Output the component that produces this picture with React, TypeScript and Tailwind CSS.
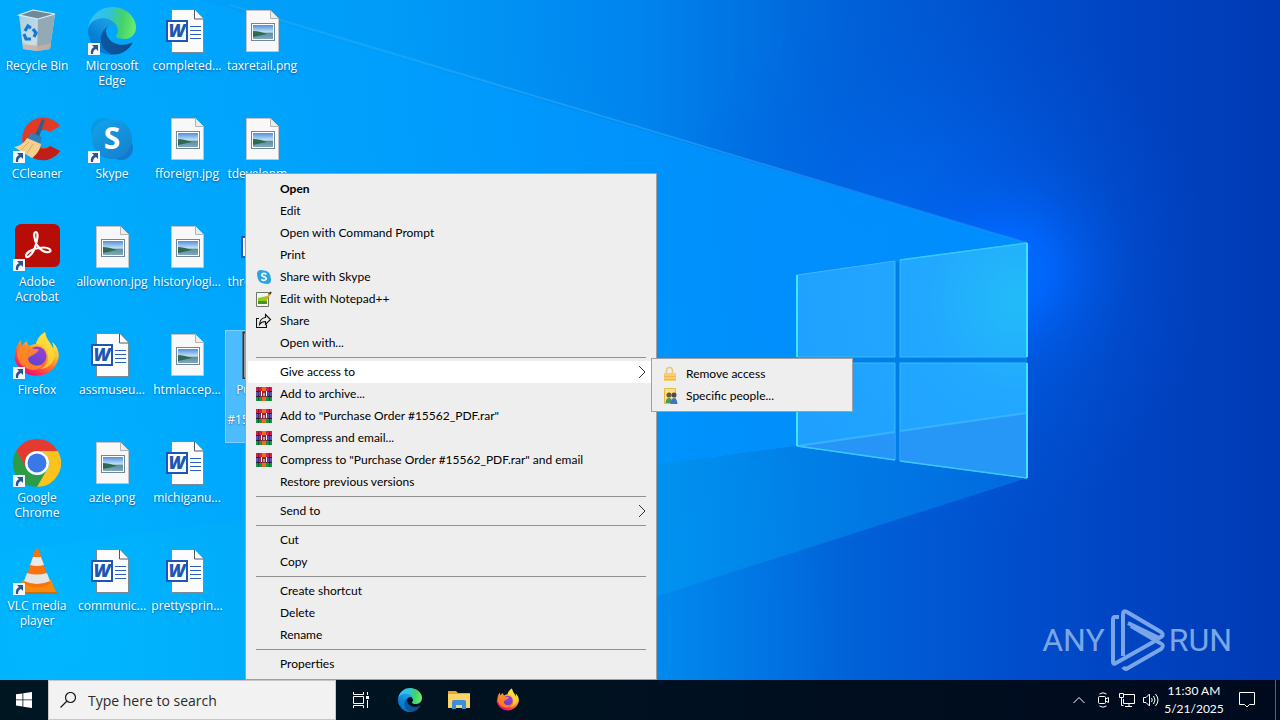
import React from 'react';

/* ---------- wallpaper ---------- */

const Wallpaper = () => (
  <svg
    className="absolute inset-0 h-full w-full"
    viewBox="0 0 1280 680"
    preserveAspectRatio="xMidYMid slice"
    aria-hidden="true"
  >
    <defs>
      <linearGradient id="wp-base" x1="0" y1="0" x2="1" y2="0">
        <stop offset="0" stopColor="#00a9ff" />
        <stop offset="0.3" stopColor="#009dfa" />
        <stop offset="0.5" stopColor="#0084ee" />
        <stop offset="0.66" stopColor="#0062d8" />
        <stop offset="0.8" stopColor="#004dcb" />
        <stop offset="0.9" stopColor="#0042c0" />
        <stop offset="1" stopColor="#003ab4" />
      </linearGradient>
      <radialGradient id="wp-glow" gradientUnits="userSpaceOnUse" cx="1010" cy="270" r="130">
        <stop offset="0" stopColor="#006eff" />
        <stop offset="0.3" stopColor="#0068ff" stopOpacity="0.85" />
        <stop offset="0.65" stopColor="#005cee" stopOpacity="0.35" />
        <stop offset="1" stopColor="#0050dc" stopOpacity="0" />
      </radialGradient>
      <radialGradient id="wp-halo" gradientUnits="userSpaceOnUse" cx="930" cy="270" r="280">
        <stop offset="0" stopColor="#0074ff" stopOpacity="0.8" />
        <stop offset="0.5" stopColor="#0068f4" stopOpacity="0.35" />
        <stop offset="1" stopColor="#0058e0" stopOpacity="0" />
      </radialGradient>
      <radialGradient id="wp-corner" gradientUnits="userSpaceOnUse" cx="60" cy="640" r="800">
        <stop offset="0" stopColor="#00b8ff" />
        <stop offset="0.5" stopColor="#00aaf8" stopOpacity="0.6" />
        <stop offset="1" stopColor="#0090ec" stopOpacity="0" />
      </radialGradient>
      <linearGradient id="wp-beam" x1="0" y1="0" x2="1" y2="0">
        <stop offset="0" stopColor="#00b0ff" stopOpacity="0.5" />
        <stop offset="0.6" stopColor="#0096ff" stopOpacity="0.85" />
        <stop offset="1" stopColor="#0090ff" stopOpacity="0.95" />
      </linearGradient>
      <linearGradient id="wp-low" x1="0" y1="0" x2="1" y2="0">
        <stop offset="0" stopColor="#00b0ff" stopOpacity="0" />
        <stop offset="0.65" stopColor="#0096f0" stopOpacity="0.7" />
        <stop offset="1" stopColor="#0074e4" stopOpacity="0.7" />
      </linearGradient>
      <linearGradient id="wp-ray" gradientUnits="userSpaceOnUse" x1="230" y1="0" x2="1027" y2="0">
        <stop offset="0" stopColor="#5cc8ff" stopOpacity="0.15" />
        <stop offset="0.6" stopColor="#30b0ff" stopOpacity="0.5" />
        <stop offset="1" stopColor="#20a0ff" stopOpacity="0.4" />
      </linearGradient>
      <radialGradient id="wp-pane" gradientUnits="userSpaceOnUse" cx="1020" cy="300" r="240">
        <stop offset="0" stopColor="#22bcf8" />
        <stop offset="0.4" stopColor="#22a8ff" />
        <stop offset="1" stopColor="#1fa0ff" />
      </radialGradient>
    </defs>
    <rect width="1280" height="680" fill="url(#wp-base)" />
    <rect width="1280" height="680" fill="url(#wp-corner)" />
    <rect width="1280" height="680" fill="url(#wp-halo)" />
    <rect width="1280" height="680" fill="url(#wp-glow)" />
    <path d="M0 0H200L1027 243V478L797 446L0 552z" fill="url(#wp-beam)" />
    <path d="M797 446L0 552V680H395L1027 478z" fill="url(#wp-low)" />
    <path d="M230 5L1027 243" stroke="url(#wp-ray)" strokeWidth="2" />
    <path d="M797 276L1027 243V478L797 446z" fill="#007fe8" />
    <g fill="url(#wp-pane)" stroke="#3cb8ff" strokeWidth="1">
      <path d="M797 275L895 261V357H797z" />
      <path d="M900 260L1027 243V357H900z" />
      <path d="M797 363H895V460L797 446z" />
      <path d="M900 363H1027V478L900 461z" />
    </g>
    <path d="M797 446L895 432V460zM900 431L1027 413V478L900 461z" fill="#2a90f4" opacity="0.7" />
    <path d="M797 446L895 432M900 431L1027 413" stroke="#38b2ff" strokeWidth="2" />
    <path d="M900 260L1027 243M797 446L895 460M900 461L1027 478" stroke="#38c8ff" strokeWidth="1.500" />
    <path d="M797 357V275M797 363V446M1027 357V243M1027 363V478" fill="none" stroke="#3ce6ff" strokeWidth="2" />
  </svg>
);

const Watermark = () => (
  <div
    className="absolute right-12 bottom-2 flex h-16 items-center font-['Roboto',sans-serif] text-[32px] leading-none text-[#7ba6e6]"
  >
    <span>ANY</span>
    <svg className="mx-1 h-16 w-14" viewBox="0 0 56 64" fill="none" stroke="#78a6e8" strokeWidth="4" strokeLinejoin="round" aria-hidden="true">
      <path d="M10 9H6Q4 9 4 12V54Q4 57 7 55L46 33" />
      <path d="M14 48V6Q14 2 18 4L52 24Q56 28 50 30L19 15" />
      <path d="M14 59Q16 62 19 60L52 41Q56 37 51 35L22 18" />
    </svg>
    <span>RUN</span>
  </div>
);

/* ---------- app and file icons ---------- */

const EdgeIcon = ({ className = 'h-12 w-12' }: { className?: string }) => (
  <svg className={className} viewBox="0 0 256 256" aria-hidden="true">
    <defs>
      <linearGradient id="edge-a" x1="60" y1="178" x2="241" y2="178" gradientUnits="userSpaceOnUse">
        <stop offset="0" stopColor="#0c59a4" />
        <stop offset="1" stopColor="#114a8b" />
      </linearGradient>
      <linearGradient id="edge-b" x1="150" y1="100" x2="40" y2="222" gradientUnits="userSpaceOnUse">
        <stop offset="0" stopColor="#1b9de2" />
        <stop offset="0.3" stopColor="#1595df" />
        <stop offset="0.7" stopColor="#0680d7" />
        <stop offset="1" stopColor="#0078d4" />
      </linearGradient>
      <linearGradient id="edge-c" x1="20" y1="60" x2="250" y2="100" gradientUnits="userSpaceOnUse">
        <stop offset="0" stopColor="#35c1f1" />
        <stop offset="0.35" stopColor="#2fc2df" />
        <stop offset="0.7" stopColor="#43d26b" />
        <stop offset="1" stopColor="#66eb6e" />
      </linearGradient>
    </defs>
    <path fill="url(#edge-a)" d="M231.07 190.54c-3.43 1.8-6.96 3.37-10.57 4.71a101.96 101.96 0 0 1-35.9 6.46c-47.31 0-88.52-32.54-88.52-74.31a31.46 31.46 0 0 1 16.43-27.31c-42.8 1.8-53.8 46.4-53.8 72.53 0 73.88 68.09 81.37 82.76 81.37 7.91 0 19.84-2.3 27-4.56l1.31-.44a128.34 128.34 0 0 0 66.6-52.8 4 4 0 0 0-5.31-5.65z" />
    <path fill="url(#edge-b)" d="M105.73 241.42a79.2 79.2 0 0 1-22.74-21.34 80.72 80.72 0 0 1 29.53-120c3.12-1.47 8.45-4.13 15.54-4a32.35 32.35 0 0 1 25.69 13 31.88 31.88 0 0 1 6.36 18.66c0-.21 24.46-79.6-80-79.6-43.9 0-80 41.66-80 78.21a130.15 130.15 0 0 0 12.11 56 128 128 0 0 0 156.38 67.11 75.55 75.55 0 0 1-62.78-8z" />
    <path fill="url(#edge-c)" d="M152.33 148.86c-.81 1.05-3.3 2.5-3.3 5.66 0 2.61 1.7 5.12 4.72 7.23 14.38 10 41.49 8.68 41.56 8.68a59.56 59.56 0 0 0 30.27-8.35A61.38 61.38 0 0 0 256 109.11c.26-22.41-8-37.31-11.34-43.91C223.46 23.86 177.72 0 128 0A128 128 0 0 0 0 126.2c.48-36.54 36.8-66.05 80-66.05 3.5 0 23.46.34 42 10.07 16.34 8.58 24.9 18.94 30.85 29.21 6.18 10.67 7.28 24.15 7.28 29.52s-2.74 13.33-7.8 19.91z" />
  </svg>
);

const FirefoxIcon = ({ className = 'h-12 w-12' }: { className?: string }) => (
  <svg className={className} viewBox="0 0 48 48" aria-hidden="true">
    <defs>
      <linearGradient id="ff-body" x1="0.8" y1="0.1" x2="0.25" y2="0.95">
        <stop offset="0" stopColor="#fff44f" />
        <stop offset="0.3" stopColor="#ffc22e" />
        <stop offset="0.55" stopColor="#ff7a2a" />
        <stop offset="0.8" stopColor="#ff3750" />
        <stop offset="1" stopColor="#eb0878" />
      </linearGradient>
      <linearGradient id="ff-core" x1="0.7" y1="0" x2="0.3" y2="1">
        <stop offset="0" stopColor="#a03be0" />
        <stop offset="1" stopColor="#5b46c8" />
      </linearGradient>
    </defs>
    <path fill="url(#ff-body)" d="M45 20c-1-4-3-7-6-9 1 3 2 5 1 7C38 12 33 9 32 1c-6 4-8 8-9 12-3 0-5 1-7 2-1-1-2-3-2-5-2 1-4 3-5 5-1-2-1-4-1-6-4 4-5 8-5 11-1 3-2 6-1 9a22.500 22.500 0 0 0 43 0c1-3 1-6 0-9z" />
    <path fill="#ffdb3c" d="M32 1c-6 4-8 8-9 12 6 0 11 5 12 11 1 7-3 12-8 14 10 0 16-9 14-18C39 12 33 9 32 1z" opacity="0.75" />
    <circle cx="24" cy="25" r="9.500" fill="url(#ff-core)" />
    <path fill="#ff8a26" d="M4 20c2-5 7-7 12-5 2 2 4 3 8 3 2 0 2 1 1 2-1 2-4 3-5 4-2 1-5 2-5 5 2 5 8 7 14 5 0 2-4 5-9 5C10 38 3 30 4 20z" opacity="0.9" />
  </svg>
);

const ChromeIcon = () => (
  <svg className="h-12 w-12" viewBox="0 0 48 48" aria-hidden="true">
    <path fill="#e53a2e" d="M24 12H44.800A24 24 0 0 0 3.200 12L13.600 30A12 12 0 0 1 24 12z" />
    <path fill="#2c9c46" d="M13.600 30L3.200 12A24 24 0 0 0 24 48L34.400 30A12 12 0 0 1 13.600 30z" />
    <path fill="#fcc31e" d="M34.400 30L24 48A24 24 0 0 0 44.800 12H24A12 12 0 0 1 34.400 30z" />
    <circle cx="24" cy="24" r="12" fill="#fff" />
    <circle cx="24" cy="24" r="9.500" fill="#3b78e7" />
  </svg>
);

const RecycleIcon = () => (
  <svg className="h-12 w-12" viewBox="0 0 48 48" aria-hidden="true">
    <defs>
      <linearGradient id="bin" x1="0" y1="0" x2="1" y2="1">
        <stop offset="0" stopColor="#a4cfe6" />
        <stop offset="0.6" stopColor="#cfdde4" />
        <stop offset="1" stopColor="#98a8b2" />
      </linearGradient>
    </defs>
    <path d="M6 8L25 12 42 7 37 42 24 44 10 42z" fill="url(#bin)" />
    <path d="M25 12L42 7 37 42 24 44z" fill="#93a9b6" />
    <path d="M10 37L25 39 38 36 37 42 24 44 10 42z" fill="#c8b0a0" opacity="0.8" />
    <path d="M6 8L20 3 42 7 25 12z" fill="#6f8998" stroke="#e0f0f8" strokeWidth="1.200" />
    <path d="M12 24L15 19 18 21M20 22L23 26 21 30M18 32H13L11 27" fill="none" stroke="#1478d4" strokeWidth="3.200" />
  </svg>
);

const CCleanerIcon = () => (
  <svg className="h-12 w-12" viewBox="0 0 48 48" aria-hidden="true">
    <path d="M47 11A21 21 0 1 0 47 36L37 31A9 9 0 1 1 37 17z" fill="#e23a26" />
    <path d="M47 36A21 21 0 0 1 20 43L26 33A9 9 0 0 0 37 31z" fill="#c01f18" />
    <path d="M29 4l3 1-6 17-4-2z" fill="#2c5f90" />
    <path d="M18 18l11 4-2 7-13-5z" fill="#2f80b8" />
    <path d="M14 23l14 6c-1 6-4 10-9 14L1 32c6-1 10-4 13-9z" fill="#f6cf8d" />
    <path d="M16 27l-8 8M20 29l-6 9" stroke="#dca95a" strokeWidth="1" />
  </svg>
);

const SkypeIcon = () => (
  <svg className="h-12 w-12" viewBox="0 0 48 48" aria-hidden="true">
    <defs>
      <linearGradient id="skype" x1="0" y1="0" x2="0.6" y2="1">
        <stop offset="0" stopColor="#12a4ea" />
        <stop offset="1" stopColor="#1484d0" />
      </linearGradient>
    </defs>
    <circle cx="15" cy="15" r="12" fill="#0899e6" />
    <circle cx="33" cy="33" r="12" fill="#1478cc" />
    <circle cx="24" cy="24" r="20" fill="url(#skype)" />
    <text x="24" y="34" textAnchor="middle" fill="#fff" className="font-['Open_Sans',sans-serif] text-[30px] font-bold">S</text>
  </svg>
);

const AcrobatIcon = () => (
  <svg className="h-12 w-12" viewBox="0 0 48 48" aria-hidden="true">
    <rect x="2" y="1" width="45" height="43" rx="6" fill="#b80c06" />
    <path d="M23 9c-3 0-2 7 1 13 3 5 8 8 12 7s0-6-10-4c-8 1-13 5-13 8 0 3 5 0 8-6 3-7 5-18 2-18z" fill="none" stroke="#fff" strokeWidth="2.200" />
  </svg>
);

const VlcIcon = () => (
  <svg className="h-12 w-12" viewBox="0 0 48 48" aria-hidden="true">
    <path d="M10 33H38L44 47H4z" fill="#f58a0e" />
    <path d="M4 45H44V47H4z" fill="#cf6a05" />
    <path d="M22 3Q24 0 26 3L37 37Q24 44 11 37z" fill="#f8730d" />
    <path d="M20 10H28L31 18Q24 20 17 18z" fill="#e9e9e9" />
    <path d="M14 26Q24 29 34 26L37 34Q24 40 11 34z" fill="#e4e4e4" />
  </svg>
);

const WordIcon = () => (
  <svg className="h-12 w-12" viewBox="0 0 48 48" aria-hidden="true">
    <path d="M8.500 2.500H31.500L40.500 12V45.500H8.500z" fill="#fcfcfc" stroke="#7c8a96" />
    <path d="M31.500 2.500V12H40.500" fill="#fff" stroke="#4c5a66" />
    <path d="M27 19.500H38M27 23.500H38M27 27.500H38M27 31.500H38" stroke="#2b62b4" />
    <rect x="4" y="14" width="20" height="20" fill="#fff" stroke="#1d57b3" strokeWidth="2" />
    <text x="14" y="30" textAnchor="middle" fill="#1d57b3" className="font-['Open_Sans',sans-serif] text-[18px] font-extrabold italic">W</text>
  </svg>
);

const ImageIcon = () => (
  <svg className="h-12 w-12" viewBox="0 0 48 48" aria-hidden="true">
    <defs>
      <linearGradient id="pic" x1="0" y1="0" x2="0" y2="1">
        <stop offset="0" stopColor="#4f90dc" />
        <stop offset="0.5" stopColor="#c4e0f4" />
        <stop offset="0.6" stopColor="#5f8f98" />
        <stop offset="1" stopColor="#7fa8c4" />
      </linearGradient>
    </defs>
    <path d="M8.500 3.500H32.500L40.500 11.500V44.500H8.500z" fill="#f8f8f8" stroke="#c4c4c4" />
    <path d="M32.500 3.500V11.500H40.500" fill="#e8eef2" stroke="#b4b4b4" />
    <rect x="13.500" y="16.500" width="23" height="17" fill="#fff" stroke="#6f8798" />
    <rect x="15" y="18" width="20" height="14" fill="url(#pic)" />
    <path d="M15 24Q20 24 29 27L15 30z" fill="#2f6a50" />
  </svg>
);

const ProgramIcon = () => (
  <svg className="h-12 w-12" viewBox="0 0 48 48" aria-hidden="true">
    <path d="M5.500 1.500H42.500V47.500H5.500z" fill="#fff" stroke="#3a3230" strokeWidth="2" />
  </svg>
);

const ShortcutArrow = () => (
  <svg className="absolute bottom-0 left-0 h-3 w-3" viewBox="0 0 12 12" aria-hidden="true">
    <path d="M0 0H12V12H0z" fill="#f6f6f6" />
    <path d="M4 2H10V8L8 6Q5 7 5 11H3Q2 6 6 4z" fill="#2a5594" />
  </svg>
);

/* ---------- desktop ---------- */

type Shortcut = {
  label: string;
  icon: React.ReactNode;
  linked?: boolean;
  selected?: boolean;
};

// fills column by column, six to a column
const shortcuts: Shortcut[] = [
  { label: 'Recycle Bin', icon: <RecycleIcon /> },
  { label: 'CCleaner', icon: <CCleanerIcon />, linked: true },
  { label: 'Adobe\nAcrobat', icon: <AcrobatIcon />, linked: true },
  { label: 'Firefox', icon: <FirefoxIcon />, linked: true },
  { label: 'Google\nChrome', icon: <ChromeIcon />, linked: true },
  { label: 'VLC media\nplayer', icon: <VlcIcon />, linked: true },
  { label: 'Microsoft\nEdge', icon: <EdgeIcon />, linked: true },
  { label: 'Skype', icon: <SkypeIcon />, linked: true },
  { label: 'allownon.jpg', icon: <ImageIcon /> },
  { label: 'assmuseu...', icon: <WordIcon /> },
  { label: 'azie.png', icon: <ImageIcon /> },
  { label: 'communic...', icon: <WordIcon /> },
  { label: 'completed...', icon: <WordIcon /> },
  { label: 'fforeign.jpg', icon: <ImageIcon /> },
  { label: 'historylogi...', icon: <ImageIcon /> },
  { label: 'htmlaccep...', icon: <ImageIcon /> },
  { label: 'michiganu...', icon: <WordIcon /> },
  { label: 'prettysprin...', icon: <WordIcon /> },
  { label: 'taxretail.png', icon: <ImageIcon /> },
  { label: 'tdevelopm...', icon: <ImageIcon /> },
  { label: 'throughou...', icon: <WordIcon /> },
  { label: 'Purchase\nOrder\n#15562_PDF\n.exe', icon: <ProgramIcon />, selected: true },
];

const DesktopIcon = ({ label, icon, linked, selected }: Shortcut) => (
  <button
    type="button"
    className={
      'flex flex-col items-center self-start pt-px pr-px text-white ' +
      (selected ? 'bg-[#4dbcff] pb-px outline outline-1 -outline-offset-1 outline-[#7fd0ff]' : '')
    }
  >
    <span className="relative block h-12 w-12">
      {icon}
      {linked && <ShortcutArrow />}
    </span>
    <span className="mt-[3px] text-center text-[12px] leading-[15px] whitespace-pre [text-shadow:0_1px_2px_rgba(0,40,90,0.6)]">
      {label}
    </span>
  </button>
);

/* ---------- context menu ---------- */

const SkypeSmall = () => (
  <svg className="h-4 w-4" viewBox="0 0 16 16" aria-hidden="true">
    <circle cx="5" cy="5" r="4" fill="#2aa5e6" />
    <circle cx="11" cy="11" r="4" fill="#2aa5e6" />
    <circle cx="8" cy="8" r="6.500" fill="#2aa5e6" />
    <path d="M10.500 5.500Q8 3.500 6 5.200 5.200 7 8 7.800 11 8.600 10 10.500 8 12.300 5.300 10.300" fill="none" stroke="#fff" strokeWidth="1.600" />
  </svg>
);

const NotepadIcon = () => (
  <svg className="h-4 w-4" viewBox="0 0 16 16" aria-hidden="true">
    <path d="M0.500 1.500H12.500V15.500H0.500z" fill="#f4f6ee" stroke="#6f7468" />
    <path d="M2 7L11 5V13H2z" fill="#8ccc2c" />
    <path d="M2 10H11V13H2z" fill="#3d9a1c" />
    <path d="M9 10L14 3" stroke="#e8a425" strokeWidth="2" />
    <path d="M13.500 3L15 1" stroke="#333" strokeWidth="2" />
  </svg>
);

const ShareIcon = () => (
  <svg className="h-4 w-4" viewBox="0 0 16 16" fill="none" stroke="#111" strokeWidth="1.100" aria-hidden="true">
    <path d="M3 5.500H0.500V14.500H10.500V11.500" />
    <path d="M9.500 1.500L14.500 6.500 9.500 11.500V8.500Q5.500 8.500 3.500 11.500 4 5 9.500 4.500z" />
  </svg>
);

const RarIcon = () => (
  <svg className="h-4 w-4" viewBox="0 0 16 16" aria-hidden="true">
    <path d="M0 1H16V5H0z" fill="#d8204c" />
    <path d="M0 6H16V10H0z" fill="#5a50b8" />
    <path d="M0 11H16V15H0z" fill="#109a40" />
    <path d="M0 5H16V6H0zM0 10H16V11H0z" fill="#2a1a3a" />
    <path d="M2.500 1V15M13.500 1V15" stroke="#201030" strokeOpacity="0.5" />
    <path d="M6 1H10V15H6z" fill="#ee6a1c" />
    <path d="M4 5H12V11H4z" fill="#8c2b3c" />
    <path d="M5.500 5V10M8 7V10M10.500 5V10" stroke="#fff" strokeWidth="1" />
  </svg>
);

const LockIcon = () => (
  <svg className="h-4 w-4" viewBox="0 0 16 16" aria-hidden="true">
    <path d="M4.500 8V5Q4.500 1.500 7.500 1.500T10.500 5V8" fill="none" stroke="#e8c877" strokeWidth="1.600" />
    <path d="M2 7H14V15H2z" fill="#f8cf6c" />
    <path d="M2 10.500H14M2 13.500H14" stroke="#efb94e" />
  </svg>
);

const PeopleIcon = () => (
  <svg className="h-4 w-4" viewBox="0 0 16 16" aria-hidden="true">
    <path d="M2.500 0.500H13.500V15.500H2.500z" fill="#fbdf83" stroke="#e8b93e" />
    <circle cx="7" cy="7" r="2.500" fill="#6a5642" />
    <circle cx="12" cy="7" r="2.500" fill="#4c4a52" />
    <path d="M3.500 15Q4 10 7 10T10 15z" fill="#4a9a5c" />
    <path d="M8.500 16Q9 10 12 10T15.500 16z" fill="#3a76c8" />
  </svg>
);

const Arrow = () => (
  <svg className="ml-auto h-3.5 w-2" viewBox="0 0 8 14" fill="none" stroke="#333" aria-hidden="true">
    <path d="M1 1L7 7 1 13" />
  </svg>
);

type Entry = {
  label: string;
  icon?: React.ReactNode;
  bold?: boolean;
  active?: boolean;
  children?: Entry[];
  more?: boolean;
};

const menuGroups: Entry[][] = [
  [
    { label: 'Open', bold: true },
    { label: 'Edit' },
    { label: 'Open with Command Prompt' },
    { label: 'Print' },
    { label: 'Share with Skype', icon: <SkypeSmall /> },
    { label: 'Edit with Notepad++', icon: <NotepadIcon /> },
    { label: 'Share', icon: <ShareIcon /> },
    { label: 'Open with...' },
  ],
  [
    {
      label: 'Give access to',
      active: true,
      more: true,
      children: [
        { label: 'Remove access', icon: <LockIcon /> },
        { label: 'Specific people...', icon: <PeopleIcon /> },
      ],
    },
    { label: 'Add to archive...', icon: <RarIcon /> },
    { label: 'Add to "Purchase Order #15562_PDF.rar"', icon: <RarIcon /> },
    { label: 'Compress and email...', icon: <RarIcon /> },
    { label: 'Compress to "Purchase Order #15562_PDF.rar" and email', icon: <RarIcon /> },
    { label: 'Restore previous versions' },
  ],
  [{ label: 'Send to', more: true }],
  [{ label: 'Cut' }, { label: 'Copy' }],
  [{ label: 'Create shortcut' }, { label: 'Delete' }, { label: 'Rename' }],
  [{ label: 'Properties' }],
];

const menuBox = 'border border-[#a0a0a0] bg-[#eeeeee] px-0.5 py-1';

const MenuItem = ({ entry }: { entry: Entry }) => (
  <li role="none" className="relative">
    <button
      type="button"
      role="menuitem"
      className={
        'flex h-[22px] w-full items-center pr-2 pl-2 text-left whitespace-nowrap ' +
        (entry.active ? 'bg-white ' : '') +
        (entry.bold ? 'font-bold' : '')
      }
    >
      <span className="mr-2 block h-4 w-4 shrink-0">{entry.icon}</span>
      {entry.label}
      {entry.more && <Arrow />}
    </button>
    {entry.children && (
      <ul role="menu" className={'absolute -top-[3px] left-full z-10 -ml-[3px] w-[202px] ' + menuBox}>
        {entry.children.map((child) => (
          <MenuItem key={child.label} entry={child} />
        ))}
      </ul>
    )}
  </li>
);

const ContextMenu = () => (
  <div role="menu" className={"absolute top-[173px] left-[245px] w-[412px] font-['Lato','Open_Sans',sans-serif] text-[12px] text-black " + menuBox}>
    {menuGroups.map((group, index) => (
      <ul
        key={index}
        role="group"
      >
        {index > 0 && <li role="separator" className="mx-2 my-[3px] h-px bg-[#919191]" />}
        {group.map((entry) => (
          <MenuItem key={entry.label} entry={entry} />
        ))}
      </ul>
    ))}
  </div>
);

/* ---------- taskbar ---------- */

const ExplorerIcon = () => (
  <svg className="h-6 w-6" viewBox="0 0 24 24" aria-hidden="true">
    <path d="M1 3H9L11 5H23V20H1z" fill="#e8a62c" />
    <path d="M1 6H23V20H1z" fill="#fbd367" />
    <path d="M5 21V14Q5 12 7 12H17Q19 12 19 14V21H15V17H9V21H5z" fill="#3a8fd8" />
  </svg>
);

const TaskViewIcon = () => (
  <svg className="h-4 w-4" viewBox="0 0 16 16" fill="none" stroke="#fff" aria-hidden="true">
    <path d="M0.500 0V2.500H10.500V0M0.500 16V13.500H10.500V16M0.500 4.500H10.500V11.500H0.500zM14.500 0V3M14.500 8V16" />
    <path d="M13 4H16V7H13z" fill="#fff" stroke="none" />
  </svg>
);

const trayIcons = [
  {
    name: 'Show hidden icons',
    icon: <path d="M2.500 11L8 5.500 13.500 11" />,
  },
  {
    name: 'Meet Now',
    icon: <path d="M4.500 2Q8 -0.500 11.500 2M4.500 14Q8 16.500 11.500 14M4.500 4.500H9.500Q10.500 4.500 10.500 5.500V10.500Q10.500 11.500 9.500 11.500H4.500Q3.500 11.500 3.500 10.500V5.500Q3.500 4.500 4.500 4.500zM10.500 7L13.500 5.500V10.500L10.500 9" />,
  },
  {
    name: 'Network',
    icon: <path d="M5 2.500H15.500V11.500H4.500V7M10 11.500V14.500M6 14.500H13M0.500 1.500H4.500V5.500H0.500zM2.500 5.500V13.500H4.500" />,
  },
  {
    name: 'Volume',
    icon: <path d="M0.500 5.500H3L6.500 2V14L3 10.500H0.500zM8.500 6Q10 8 8.500 10M10.500 4Q13.500 8 10.500 12M12.500 2Q17.500 8 12.500 14" />,
  },
];

const Taskbar = () => (
  <footer className="flex h-10 items-stretch bg-linear-to-r from-[#001722] to-[#000a1e] text-white">
    <button type="button" aria-label="Start" className="flex w-12 items-center justify-center">
      <svg className="h-4 w-4" viewBox="0 0 16 16" fill="#fff" aria-hidden="true">
        <path d="M0 2.300L6.500 1.400V7.500H0zM7.300 1.300L16 0V7.500H7.300zM0 8.300H6.500V14.500L0 13.600zM7.300 8.300H16V16L7.300 14.700z" />
      </svg>
    </button>
    <label className="flex w-72 items-center gap-3 border border-[#c8c8c8] bg-[#f2f2f2] pl-[11px] text-[#1a1a1a]">
      <svg className="h-4 w-4 shrink-0" viewBox="0 0 16 16" fill="none" stroke="currentColor" strokeWidth="1.200" aria-hidden="true">
        <circle cx="10.500" cy="5.500" r="5" />
        <path d="M7 9L0.500 15.500" />
      </svg>
      <input
        type="text"
        aria-label="Search"
        placeholder="Type here to search"
        className="min-w-0 flex-1 bg-transparent text-[14px] outline-none placeholder:text-[#2b2b2b]"
      />
    </label>
    <nav className="flex">
      <button type="button" aria-label="Task View" className="flex w-[49px] items-center justify-center">
        <TaskViewIcon />
      </button>
      <button type="button" aria-label="Microsoft Edge" className="flex w-[49px] items-center justify-center">
        <EdgeIcon className="h-6 w-6" />
      </button>
      <button type="button" aria-label="File Explorer" className="flex w-[49px] items-center justify-center">
        <ExplorerIcon />
      </button>
      <button type="button" aria-label="Firefox" className="flex w-[49px] items-center justify-center">
        <FirefoxIcon className="h-6 w-6" />
      </button>
    </nav>
    <div className="ml-auto flex">
      {trayIcons.map((item) => (
        <button key={item.name} type="button" aria-label={item.name} className="flex w-6 items-center justify-center">
          <svg className="h-4 w-4" viewBox="0 0 16 16" fill="none" stroke="#fff" aria-hidden="true">
            {item.icon}
          </svg>
        </button>
      ))}
      <button type="button" className="w-[62px] text-center font-['Lato','Open_Sans',sans-serif] text-[12px] leading-[18px] whitespace-nowrap">
        <span className="block">11:30 AM</span>
        <span className="block">5/21/2025</span>
      </button>
      <button type="button" aria-label="Notifications" className="flex w-11 items-center justify-center">
        <svg className="h-4 w-4" viewBox="0 0 16 16" fill="none" stroke="#fff" aria-hidden="true">
          <path d="M0.500 0.500H15.500V12.500H10.500L8 15 5.500 12.500H0.500z" />
        </svg>
      </button>
      <button type="button" aria-label="Show desktop" className="ml-1.5 w-[5px] border-l border-[#5a6470]" />
    </div>
  </footer>
);

export default function App() {
  return (
    <div className="flex min-h-screen flex-col font-['Open_Sans','Noto_Sans',sans-serif]">
      <main className="relative flex-1 bg-[#0090f5]">
        <Wallpaper />
        <Watermark />
        <div className="relative grid w-max auto-cols-[75px] grid-flow-col grid-rows-[repeat(6,108px)] pt-1.5">
          {shortcuts.map((item) => (
            <DesktopIcon key={item.label} {...item} />
          ))}
        </div>
        <ContextMenu />
      </main>
      <Taskbar />
    </div>
  );
}
